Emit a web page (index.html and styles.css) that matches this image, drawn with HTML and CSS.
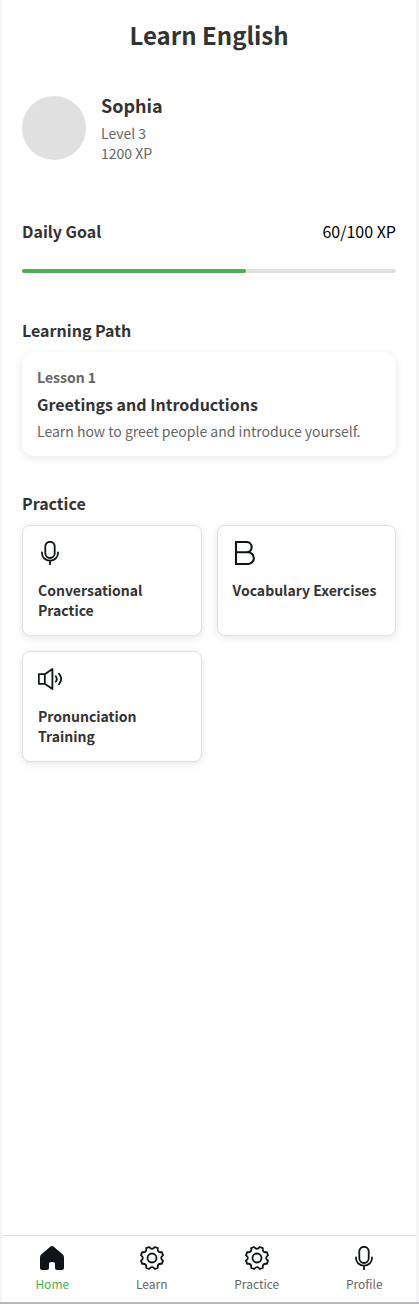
FILE: index.html
```html
<!DOCTYPE html>
<html lang="en">
<head>
  <meta charset="UTF-8">
  <meta name="viewport" content="width=device-width, initial-scale=1.0">
  <title>Learn English</title>
  <link rel="stylesheet" href="styles.css">
</head>
<body>

  <!-- Shared icons -->
  <svg class="sprite" width="0" height="0">
    <symbol id="icon-mic" viewBox="0 0 24 24">
      <rect x="7.3" y="0.8" width="9.4" height="16.2" rx="4.7"/>
      <path d="M4 11.5v.8a8 7.4 0 0 0 16 0v-.8M12 19.8V23.5"/>
    </symbol>
    <symbol id="icon-gear" viewBox="0 0 24 24">
      <circle cx="12" cy="12" r="4.5"/>
      <path d="M9.2 1 Q12 4.7 14.8 1 L17.8 2.2 Q17.2 6.8 21.8 6.2 L23 9.2 Q19.3 12 23 14.8 L21.8 17.8 Q17.2 17.2 17.8 21.8 L14.8 23 Q12 19.3 9.2 23 L6.2 21.8 Q6.8 17.2 2.2 17.8 L1 14.8 Q4.7 12 1 9.2 L2.2 6.2 Q6.8 6.8 6.2 2.2 Z"/>
    </symbol>
  </svg>

  <div class="container">
    <!-- Header -->
    <div class="header">
      <h1>Learn English</h1>
    </div>

    <!-- Profile -->
    <div class="profile">
      <div class="avatar"></div>
      <div class="profile-info">
        <h2>Sophia</h2>
        <p>Level 3</p>
        <p>1200 XP</p>
      </div>
    </div>

    <!-- Daily goal -->
    <div class="daily-goal">
      <div class="goal-header">
        <h3>Daily Goal</h3>
        <span>60/100 XP</span>
      </div>
      <div class="progress-bar">
        <div class="progress" style="width: 60%"></div>
      </div>
    </div>

    <!-- Learning path -->
    <div class="learning-path">
      <h3>Learning Path</h3>
      <div class="lesson-card">
        <h4>Lesson 1</h4>
        <h5>Greetings and Introductions</h5>
        <p>Learn how to greet people and introduce yourself.</p>
      </div>
    </div>

    <!-- Practice -->
    <div class="practice">
      <h3>Practice</h3>
      <div class="practice-grid">
        <div class="practice-card">
          <svg class="icon"><use href="#icon-mic"/></svg>
          <p>Conversational Practice</p>
        </div>
        <div class="practice-card">
          <svg class="icon icon-bold" viewBox="0 0 24 24">
            <path d="M3 1h10.5a5 5 0 0 1 0 10.3H3zM3 11.3h12a5.8 5.8 0 0 1 0 11.7H3z"/>
          </svg>
          <p>Vocabulary Exercises</p>
        </div>
        <div class="practice-card">
          <svg class="icon" viewBox="0 0 24 24">
            <path d="M.8 7.2h6v9.6h-6zM6.8 7.2 14.4 2v20l-7.6-5.2M17.8 9.2q2 2.8 0 5.6M21 6.8q4.3 5.2 0 10.4"/>
          </svg>
          <p>Pronunciation Training</p>
        </div>
      </div>
    </div>

    <!-- Bottom navigation -->
    <div class="nav">
      <div class="nav-item active">
        <svg class="icon icon-home" viewBox="0 0 24 24">
          <path d="M12 0q.8 0 1.5.6L22.8 8.5q1.2 1 1.2 2.5v11q0 2-2 2h-5q-2 0-2-2v-4q0-2-2-2h-2q-2 0-2 2v4q0 2-2 2H2q-2 0-2-2V11Q0 9.500 1.200 8.500L10.500.6Q11.200 0 12 0z"/>
        </svg>
        <span>Home</span>
      </div>
      <div class="nav-item">
        <svg class="icon"><use href="#icon-gear"/></svg>
        <span>Learn</span>
      </div>
      <div class="nav-item">
        <svg class="icon"><use href="#icon-gear"/></svg>
        <span>Practice</span>
      </div>
      <div class="nav-item">
        <svg class="icon"><use href="#icon-mic"/></svg>
        <span>Profile</span>
      </div>
    </div>
  </div>

</body>
</html>
```
FILE: styles.css
```css
* {
  box-sizing: border-box;
  margin: 0;
  padding: 0;
}

body {
  font-family: 'Noto Sans CJK SC', sans-serif;
  background-color: #f5f5f5;
  height: 1304px;
  padding: 0 3px 0 2px;
  border-bottom: 2px solid #b4b8be;
  overflow: hidden;
}

.container {
  display: flex;
  flex-direction: column;
  height: 100%;
  background-color: #fff;
}

.sprite {
  position: absolute;
}

h1, h2, h3, h4, h5 {
  font-weight: 700;
  color: #333;
}

/* Header */
.header {
  padding: 18px 20px 20px;
  text-align: center;
}

.header h1 {
  font-size: 24px;
  line-height: 34px;
}

/* Profile */
.profile {
  display: flex;
  align-items: center;
  gap: 15px;
  padding: 21px 20px 20px;
}

.avatar {
  width: 64px;
  height: 64px;
  border-radius: 50%;
  background-color: #e0e0e0;
}

.profile-info h2 {
  font-size: 18px;
  line-height: 25px;
  margin-bottom: 5px;
}

.profile-info p {
  font-size: 14px;
  line-height: 20px;
  color: #666;
}

/* Daily goal */
.daily-goal {
  padding: 36px 20px 23px;
}

.goal-header {
  display: flex;
  justify-content: space-between;
  font-size: 16px;
  line-height: 24px;
  color: #000;
}

h3 {
  font-size: 16px;
  line-height: 24px;
}

.progress-bar {
  height: 4px;
  margin-top: 26px;
  border-radius: 2px;
  background-color: #e0e0e0;
}

.progress {
  height: 100%;
  border-radius: 2px;
  background-color: #4caf50;
}

/* Learning path */
.learning-path {
  padding: 22px 20px 21px;
}

.lesson-card {
  height: 104px;
  margin-top: 10px;
  padding: 14px 15px;
  border-radius: 12px;
  background-color: #fff;
  box-shadow: 0 2px 8px rgba(0, 0, 0, 0.1);
}

.lesson-card h4 {
  font-size: 14px;
  line-height: 22px;
  color: #666;
}

.lesson-card h5 {
  font-size: 16px;
  line-height: 32px;
}

.lesson-card p {
  font-size: 14px;
  line-height: 22px;
  color: #666;
}

/* Practice */
.practice {
  padding: 14px 20px;
}

.practice-grid {
  display: grid;
  grid-template-columns: 1fr 1fr;
  gap: 15px;
  margin-top: 10px;
}

.practice-card {
  height: 111px;
  padding: 15px;
  border: 1px solid #e0e0e0;
  border-radius: 8px;
  background-color: #fff;
  box-shadow: 0 2px 8px rgba(0, 0, 0, 0.1);
}

.practice-card p {
  margin-top: 15px;
  font-size: 14px;
  font-weight: 700;
  line-height: 20px;
  color: #333;
}

.icon {
  display: block;
  width: 24px;
  height: 24px;
  fill: none;
  stroke: #0f1419;
  stroke-width: 1.8;
  stroke-linecap: round;
  stroke-linejoin: round;
}

.icon-bold {
  stroke-width: 2.1;
}

.icon-home {
  fill: #0f1419;
  stroke: none;
}

/* Bottom navigation */
.nav {
  display: flex;
  justify-content: space-around;
  height: 67px;
  margin-top: auto;
  padding-top: 10px;
  border-top: 1px solid #e0e0e0;
}

.nav-item {
  display: flex;
  flex-direction: column;
  align-items: center;
  gap: 5px;
  font-size: 12px;
  line-height: 18px;
  color: #666;
}

.nav-item.active {
  color: #4caf50;
}
```
